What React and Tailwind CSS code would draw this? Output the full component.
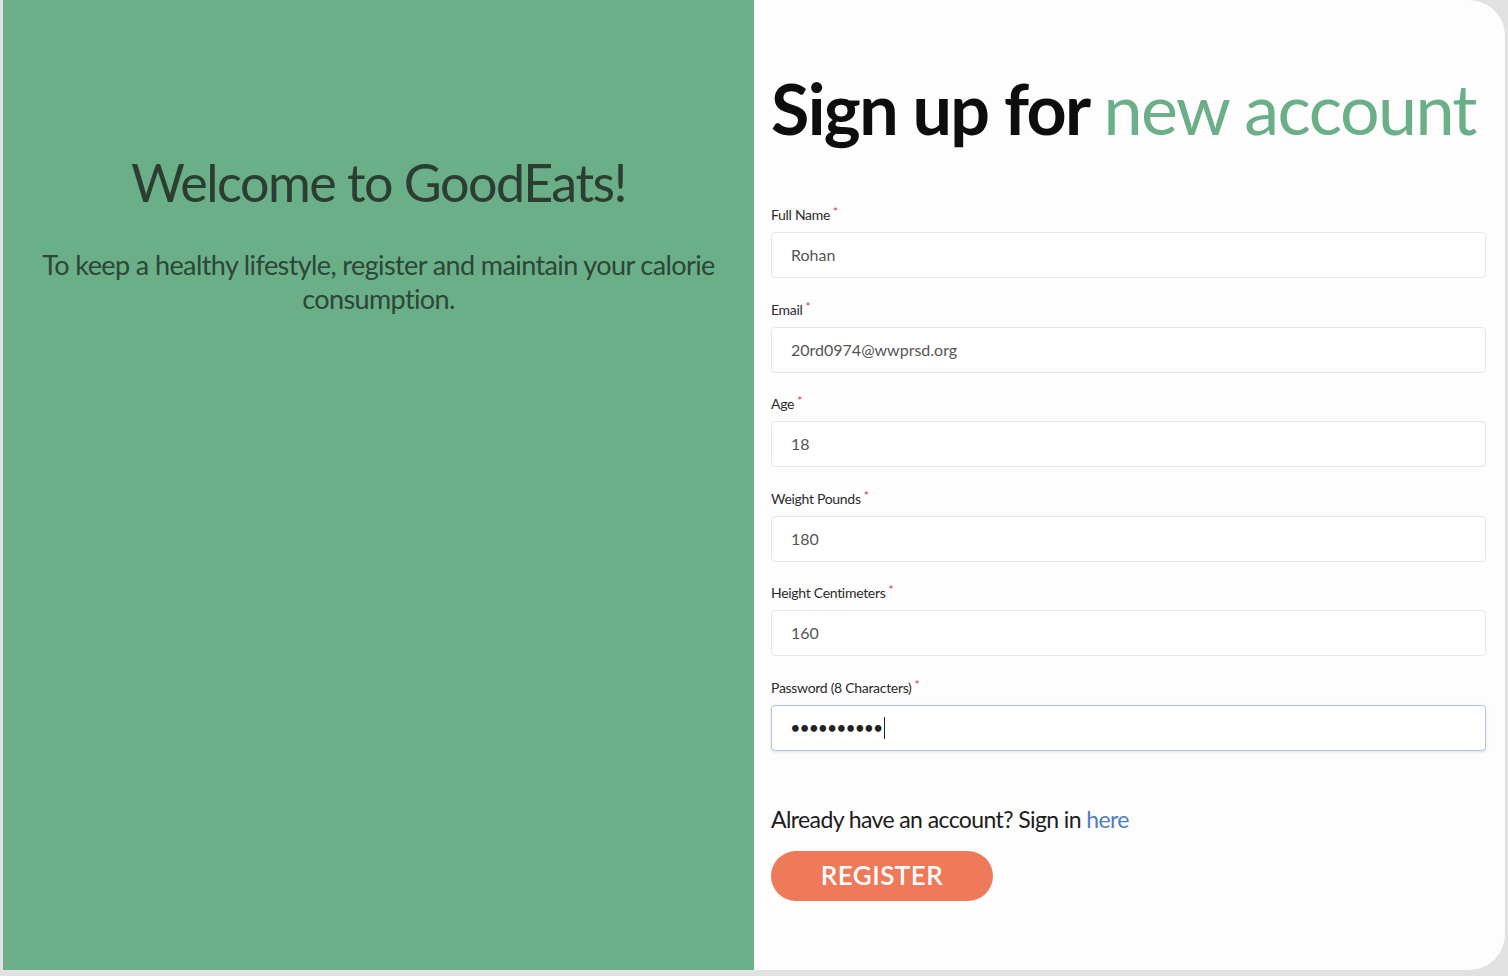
const fields = [
  { label: 'Full Name', value: 'Rohan', type: 'text' },
  { label: 'Email', value: '20rd0974@wwprsd.org', type: 'text' },
  { label: 'Age', value: '18', type: 'text' },
  { label: 'Weight Pounds', value: '180', type: 'text' },
  { label: 'Height Centimeters', value: '160', type: 'text' },
  { label: 'Password (8 Characters)', value: '••••••••••', type: 'password' },
];

function Field({ label, value, type }) {
  const focused = type === 'password';
  return (
    <div className="flex flex-col">
      <label className="text-[14px] leading-[18px] text-[#2b2b2b] tracking-[-0.3px]">
        {label}
        <span className="text-[#d0393b] text-[12px] align-top ml-[3px] relative -top-[3px]">*</span>
      </label>
      <div
        className={`mt-[8px] h-[46px] rounded-[4px] border bg-white flex items-center pl-[19px] ${
          focused ? 'border-[#b7c4d4] shadow-[0_1px_3px_rgba(100,130,170,0.25)]' : 'border-[#e4e6e9]'
        }`}
      >
        <span className={focused ? 'text-[15px] tracking-[0.5px] font-bold text-[#222]' : 'text-[16px] text-[#555]'}>
          {value}
        </span>
        {focused && <span className="w-px h-[22px] bg-[#222] ml-[1px]" />}
      </div>
    </div>
  );
}

export default function App() {
  return (
    <div className="w-full h-[976px] bg-[#e1e1e1] pl-[3px] pr-[3px] pb-[6px]" style={{ fontFamily: 'Lato, "Noto Sans", sans-serif' }}>
      <div className="h-full flex rounded-r-[36px] overflow-hidden bg-[#fdfdfd]">
        {/* Left welcome panel */}
        <div className="w-[751px] shrink-0 bg-[#6aaf88] flex flex-col items-center pt-[150px] px-[30px]">
          <h1 className="text-[52px] leading-[64px] text-[#2c3d32] tracking-[-1.5px]">Welcome to GoodEats!</h1>
          <p className="mt-[34px] text-[27px] leading-[34px] text-[#2d4637] text-center tracking-[-0.6px]">
            To keep a healthy lifestyle, register and maintain your calorie consumption.
          </p>
        </div>

        {/* Right signup form */}
        <div className="flex-1 pl-[17px] pr-[19px] pt-[66px]">
          <h2 className="text-[70px] leading-[84px] font-bold tracking-[-1.6px] text-[#0d0d0d]">
            Sign up for <span className="text-[#6aaf88] font-normal">new account</span>
          </h2>
          <div className="mt-[56px] flex flex-col gap-[22.5px]">
            {fields.map((f) => (
              <Field key={f.label} {...f} />
            ))}
          </div>
          <p className="mt-[52px] text-[23px] leading-[32px] text-[#1c1c1c] tracking-[-0.6px]">
            Already have an account? Sign in <a className="text-[#4f7ec2]">here</a>
          </p>
          <button className="mt-[16px] w-[222px] h-[50px] rounded-full bg-[#ee7a5a] text-white text-[26px] font-semibold tracking-[0.5px]">
            REGISTER
          </button>
        </div>
      </div>
    </div>
  );
}
